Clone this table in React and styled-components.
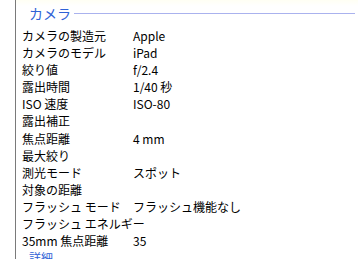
import styled, { createGlobalStyle } from "styled-components";

const Global = createGlobalStyle`
  html, body { margin: 0; padding: 0; background: #fff; }
  body { font-family: "Noto Sans CJK JP", "Liberation Sans", sans-serif; }
`;

const Frame = styled.div`
  display: flex;
  width: 358px;
  height: 259px;
  overflow: hidden;
`;

const Gutter = styled.div`
  width: 15px;
  flex: none;
  background: #fff;
  border-right: 1px solid #7a7a7a;
`;

const Panel = styled.div`
  flex: 1;
  padding: 4px 3px 0 6px;
  background: linear-gradient(#fffff4 0, #fff 6px);
`;

const SectionHead = styled.div`
  display: flex;
  align-items: center;
  gap: 3px;
  padding-left: 7px;
  height: 19px;
  margin-bottom: 4px;
`;

const SectionTitle = styled.span`
  color: #2f62d6;
  font-size: 14px;
  line-height: 19px;
`;

const Rule = styled.div`
  flex: 1;
  height: 1px;
  background: #aab2ee;
`;

const Row = styled.div`
  display: grid;
  grid-template-columns: 111px 1fr;
  height: 17.1px;
  font-size: 12px;
  line-height: 17px;
  color: #000;
  white-space: nowrap;
`;

const More = styled.div`
  padding-left: 7px;
  color: #2f62d6;
  font-size: 12px;
  line-height: 17px;
`;

const rows = [
  ["カメラの製造元", "Apple"],
  ["カメラのモデル", "iPad"],
  ["絞り値", "f/2.4"],
  ["露出時間", "1/40 秒"],
  ["ISO 速度", "ISO-80"],
  ["露出補正", ""],
  ["焦点距離", "4 mm"],
  ["最大絞り", ""],
  ["測光モード", "スポット"],
  ["対象の距離", ""],
  ["フラッシュ モード", "フラッシュ機能なし"],
  ["フラッシュ エネルギー", ""],
  ["35mm 焦点距離", "35"],
];

export default function App() {
  return (
    <>
      <Global />
      <Frame>
        <Gutter />
        <Panel>
          <SectionHead>
            <SectionTitle>カメラ</SectionTitle>
            <Rule />
          </SectionHead>
          {rows.map(([k, v]) => (
            <Row key={k}>
              <span>{k}</span>
              <span>{v}</span>
            </Row>
          ))}
          <More>詳細...</More>
        </Panel>
      </Frame>
    </>
  );
}
